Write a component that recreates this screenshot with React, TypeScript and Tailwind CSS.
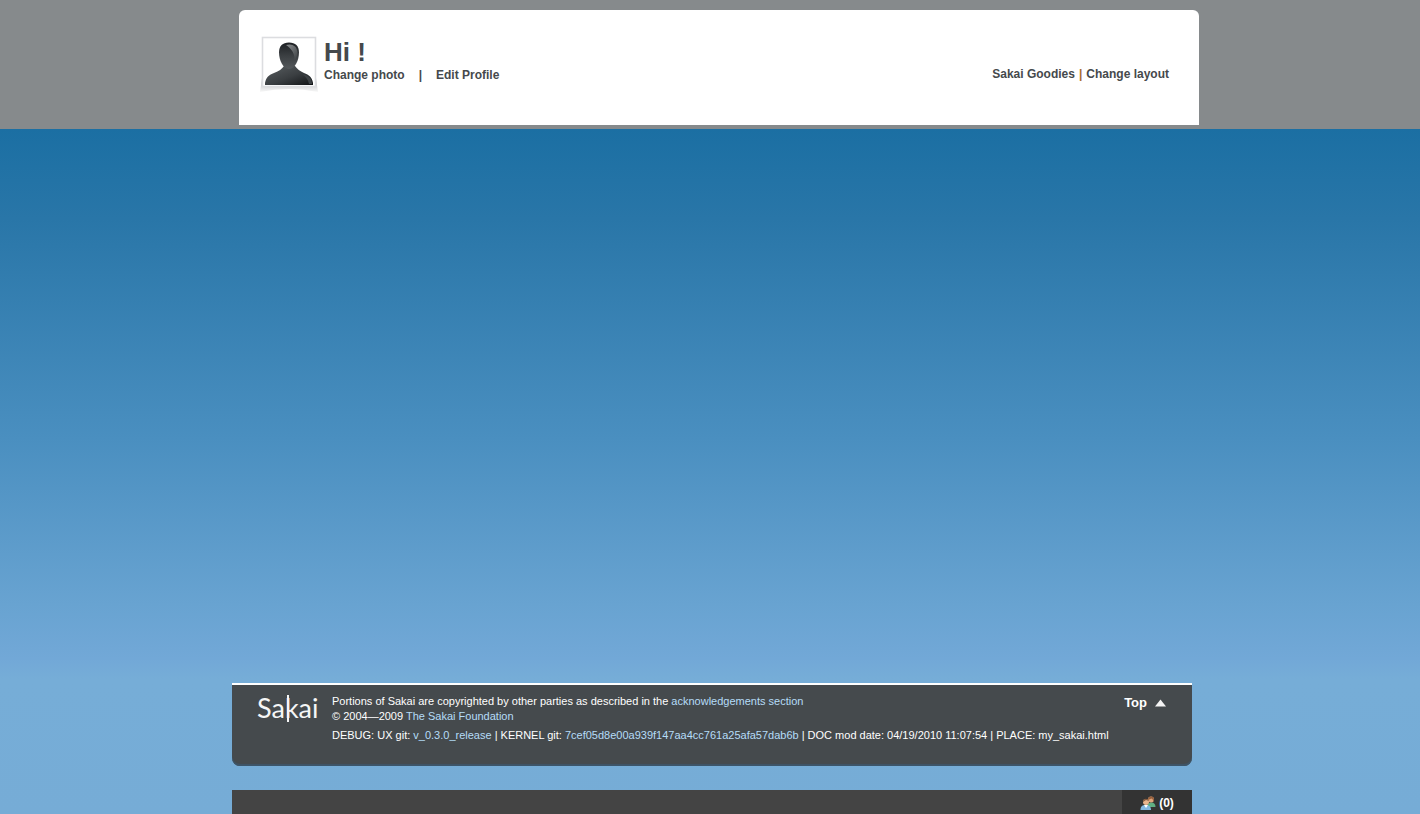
function Avatar() {
  return (
    <svg width="58" height="58" viewBox="0 0 58 58" role="img" aria-label="Profile photo" className="shrink-0">
      <defs>
        <linearGradient id="shade" x1="0" y1="0" x2="0" y2="1">
          <stop offset="0.3" stopColor="#c4c5c8" />
          <stop offset="1" stopColor="#f8f8f8" />
        </linearGradient>
        <linearGradient id="body" x1="0" y1="0" x2="1" y2="1">
          <stop offset="0" stopColor="#5a5f62" />
          <stop offset="0.55" stopColor="#3a3e41" />
          <stop offset="1" stopColor="#101214" />
        </linearGradient>
        <linearGradient id="head" x1="0" y1="0" x2="0" y2="1">
          <stop offset="0" stopColor="#1d2023" />
          <stop offset="0.5" stopColor="#3b3f42" />
          <stop offset="1" stopColor="#54585b" />
        </linearGradient>
        <linearGradient id="gloss" x1="0" y1="0" x2="1" y2="1">
          <stop offset="0" stopColor="#8d9092" />
          <stop offset="1" stopColor="#3b3f42" />
        </linearGradient>
      </defs>
      <path d="M2 42 L0 56 Q29 50 58 56 L56 42 Z" fill="url(#shade)" />
      <rect x="2.5" y="1.5" width="53" height="49" fill="#ffffff" stroke="#dcdde0" strokeWidth="1.6" />
      <path d="M5 49 V47 C6 41 9 39 14 37 C19 35 22 33 24 30 H35 C37 33 40 35 44 37 C49 39 52 41 53 47 V49 Z" fill="url(#body)" />
      <path d="M29 6.500 C35.500 6.500 39 10 39 16.500 C39 24 35 33 29 33 C23 33 19 24 19 16.500 C19 10 22.500 6.500 29 6.500 Z" fill="url(#head)" />
      <path d="M26 9 C32 7 37 10 37.500 16 C37.500 20 36 23 34.500 24 C35 18 32 13 26 9 Z" fill="url(#gloss)" />
      <path d="M42 38 C45 40 48 43 49 48 L52 48 C52 42 48 39 42 38 Z" fill="#3d4245" />
    </svg>
  );
}

function SakaiLogo() {
  return (
    <svg width="66" height="36" viewBox="0 0 66 36" role="img" aria-label="Sakai" className="shrink-0 overflow-visible">
      <text x="1" y="25" fill="#f5f6f6" fontSize="27" fontFamily="Lato, sans-serif">Sakai</text>
      <path d="M32 2 V29" stroke="#f5f6f6" strokeWidth="2" />
    </svg>
  );
}

function PeopleIcon() {
  return (
    <svg width="16" height="16" viewBox="0 0 16 16" aria-hidden="true">
      <path d="M7 12 C7 8.500 9 7.500 11.500 7.500 C14 7.500 15.500 9 15.500 12 Z" fill="#5fae83" />
      <circle cx="11" cy="4.500" r="3" fill="#dfa57d" />
      <path d="M8 5 C7.500 1 13.500 0 14 4 L14 7 C13 6 13 4 11.500 3.500 Z" fill="#97603c" />
      <path d="M0.500 15 C0.500 11 2.500 10 5.500 10 C8.500 10 11 11 11 15 Z" fill="#81b8e0" />
      <path d="M4 10 L6 13 L8 10 Z" fill="#ffffff" />
      <circle cx="6" cy="7" r="3" fill="#e8b58d" />
      <path d="M3 7 C2.500 3 8 2.500 9 6 L6 5 Z" fill="#81583c" />
    </svg>
  );
}

const footerLink = "text-[#b5dcf8] hover:underline";

export default function App() {
  return (
    <div className="flex min-h-screen flex-col bg-[#76acd6] font-['Liberation_Sans',Arial,sans-serif] text-[#45494c]">
      <header className="bg-[#868a8c] pt-[10px] pb-1 pl-[18px]">
        <div className="mx-auto flex h-[115px] max-w-[960px] items-start justify-between rounded-t-[6px] bg-white pt-[26px] pr-[30px] pl-[21px] text-xs font-bold">
          <div className="flex gap-[6px]">
            <Avatar />
            <div>
              <h1 className="text-[26px] leading-8">Hi !</h1>
              <div className="flex gap-[14px] leading-[14px]">
                <a href="#photo">Change photo</a>
                <span>|</span>
                <a href="#profile">Edit Profile</a>
              </div>
            </div>
          </div>
          <nav className="flex gap-1 pt-[31px] leading-[14px]">
            <a href="#goodies">Sakai Goodies</a>
            <span className="text-[#a66d2b]">|</span>
            <a href="#layout">Change layout</a>
          </nav>
        </div>
      </header>
      <main className="flex grow flex-col bg-[linear-gradient(to_bottom,#1b6fa3_0px,#2976a8_90px,#4a8fc0_310px,#68a3d1_475px,#72a8d7_530px,#76add7_550px,#76acd6_100%)] pl-1">
        <footer className="mx-auto mt-auto flex h-[83px] w-full max-w-[960px] items-start rounded-b-[8px] border-t-2 border-white bg-[#454a4d] pt-2 pr-[26px] pl-6 text-[11px] text-white shadow-[inset_0_-2px_1px_#3d5569]">
          <SakaiLogo />
          <div className="grow pt-px pl-[10px] leading-[15px]">
            <p>Portions of Sakai are copyrighted by other parties as described in the <a href="#acknowledgements" className={footerLink}>acknowledgements section</a></p>
            <p>© 2004—2009 <a href="#foundation" className={footerLink}>The Sakai Foundation</a></p>
            <p className="pt-1">DEBUG: UX git: <a href="#release" className={footerLink}>v_0.3.0_release</a> | KERNEL git: <a href="#kernel" className={footerLink}>7cef05d8e00a939f147aa4cc761a25afa57dab6b</a> | DOC mod date: 04/19/2010 11:07:54 | PLACE: my_sakai.html</p>
          </div>
          <a href="#top" className="flex shrink-0 items-center gap-2 pt-[2px] text-[13px] leading-4 font-bold">
            Top
            <svg width="11" height="8" viewBox="0 0 11 8" aria-hidden="true"><path d="M5.500 0.500 L11 7.500 H0 Z" fill="#f4f4f4" /></svg>
          </a>
        </footer>
        <div className="mx-auto mt-6 flex h-6 w-full max-w-[960px] justify-end bg-[#444444]">
          <button type="button" aria-label="Contacts online (0)" className="flex w-[70px] items-center justify-center gap-[3px] bg-[#333333] pt-[2px] text-xs font-bold text-white">
            <PeopleIcon />
            (0)
          </button>
        </div>
      </main>
    </div>
  );
}
